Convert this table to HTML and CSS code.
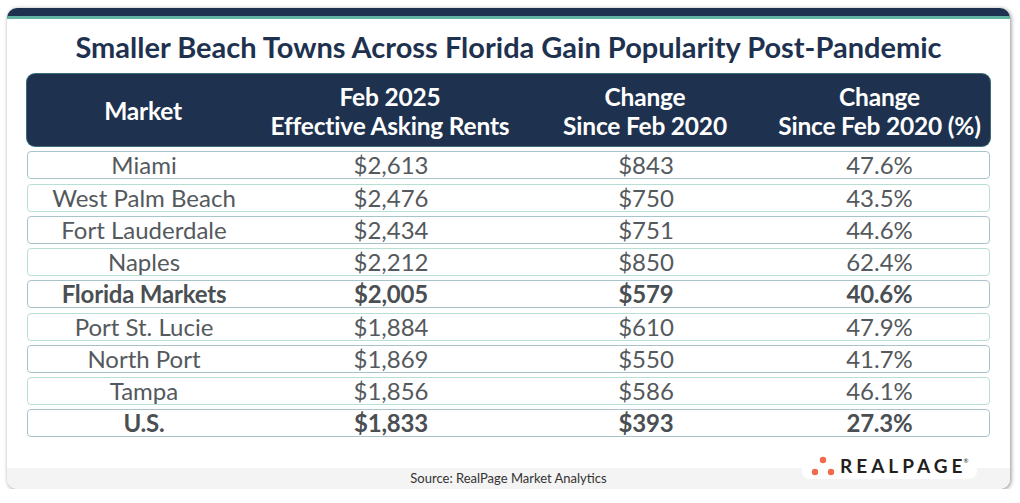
FILE: index.html
```html
<!DOCTYPE html>
<html>
<head>
<meta charset="utf-8">
<link rel="stylesheet" href="styles.css">
</head>
<body>
<div class="card">
  <div class="topbar"></div>
  <h1 class="title">Smaller Beach Towns Across Florida Gain Popularity Post-Pandemic</h1>
  <div class="table">
    <div class="head">
      <div class="hcell">Market</div>
      <div class="hcell">Feb 2025<br>Effective Asking Rents</div>
      <div class="hcell">Change<br>Since Feb 2020</div>
      <div class="hcell">Change<br>Since Feb 2020 (%)</div>
    </div>
    <div class="row a"><span>Miami</span><span>$2,613</span><span>$843</span><span>47.6%</span></div>
    <div class="row b"><span>West Palm Beach</span><span>$2,476</span><span>$750</span><span>43.5%</span></div>
    <div class="row a"><span>Fort Lauderdale</span><span>$2,434</span><span>$751</span><span>44.6%</span></div>
    <div class="row b"><span>Naples</span><span>$2,212</span><span>$850</span><span>62.4%</span></div>
    <div class="row a bold"><span>Florida Markets</span><span>$2,005</span><span>$579</span><span>40.6%</span></div>
    <div class="row b"><span>Port St. Lucie</span><span>$1,884</span><span>$610</span><span>47.9%</span></div>
    <div class="row a"><span>North Port</span><span>$1,869</span><span>$550</span><span>41.7%</span></div>
    <div class="row b"><span>Tampa</span><span>$1,856</span><span>$586</span><span>46.1%</span></div>
    <div class="row a bold"><span>U.S.</span><span>$1,833</span><span>$393</span><span>27.3%</span></div>
  </div>
  <div class="footer">Source: RealPage Market Analytics</div>
  <div class="logo">
    <svg class="dots" width="24" height="20" viewBox="0 0 24 20">
      <circle cx="12" cy="4" r="3.2" fill="#f26a4b"/>
      <circle cx="4" cy="16" r="3.2" fill="#f26a4b"/>
      <circle cx="20" cy="16" r="3.2" fill="#f26a4b"/>
    </svg>
    <span class="brand">REALPAG<span class="last">E</span></span><span class="reg">®</span>
  </div>
</div>
</body>
</html>
```

FILE: styles.css
```css
html, body {
  margin: 0;
  padding: 0;
  background: #ffffff;
}

body {
  font-family: Lato, "Liberation Sans", sans-serif;
}

.card {
  position: relative;
  margin: 8px 0 0 7px;
  width: 1003px;
  height: 481px;
  background: #ffffff;
  border-radius: 10px;
  overflow: hidden;
  box-shadow: 1px 1px 4px rgba(0, 0, 0, 0.45);
  display: flex;
  flex-direction: column;
}

.topbar {
  height: 8px;
  background: #1e3250;
  border-bottom: 3px solid #62b3a2;
  flex: none;
}

.title {
  margin: 0;
  height: 55px;
  line-height: 55px;
  text-align: center;
  font-size: 29px;
  font-weight: 700;
  color: #1e3250;
  flex: none;
}

.table {
  padding: 0 20px;
  display: flex;
  flex-direction: column;
  gap: 4.25px;
  flex: none;
}

.head {
  height: 72px;
  background: #1e3250;
  border-radius: 8px;
  box-shadow: 0 0 0 1px #3e6e7a;
  display: grid;
  grid-template-columns: 232px 262px 248px 1fr;
  align-items: center;
  color: #ffffff;
  font-size: 24.5px;
  font-weight: 700;
  line-height: 29px;
  text-align: center;
  margin-bottom: 1px;
  letter-spacing: -0.2px;
}

.hcell {
  padding-top: 1px;
}

.row {
  height: 28px;
  box-sizing: border-box;
  border: 1.5px solid #a9c3cb;
  border-radius: 4px;
  display: grid;
  grid-template-columns: 232px 262px 248px 1fr;
  align-items: center;
  text-align: center;
  font-size: 24px;
  line-height: 26px;
  color: #54595d;
}

.row.b {
  border-color: #b7dfd4;
}

.row.bold {
  font-weight: 700;
  color: #4a4f53;
  letter-spacing: -0.2px;
}

.footer {
  margin-top: auto;
  height: 21px;
  background: #f4f4f4;
  text-align: center;
  font-size: 13px;
  line-height: 21px;
  color: #333333;
  flex: none;
}

.logo {
  position: absolute;
  left: 795px;
  top: 444px;
  width: 175px;
  height: 27px;
  background: #ffffff;
  border-radius: 8px;
  display: flex;
  align-items: center;
  box-sizing: border-box;
  padding-left: 9px;
}

.dots {
  display: block;
  margin-right: 5px;
}

.brand {
  font-size: 19px;
  font-weight: 700;
  letter-spacing: 4px;
  color: #231f20;
  line-height: 20px;
}

.brand .last {
  letter-spacing: 0;
}

.reg {
  font-size: 6px;
  color: #231f20;
  align-self: flex-start;
  margin-top: 5px;
  margin-left: 1px;
}
```
